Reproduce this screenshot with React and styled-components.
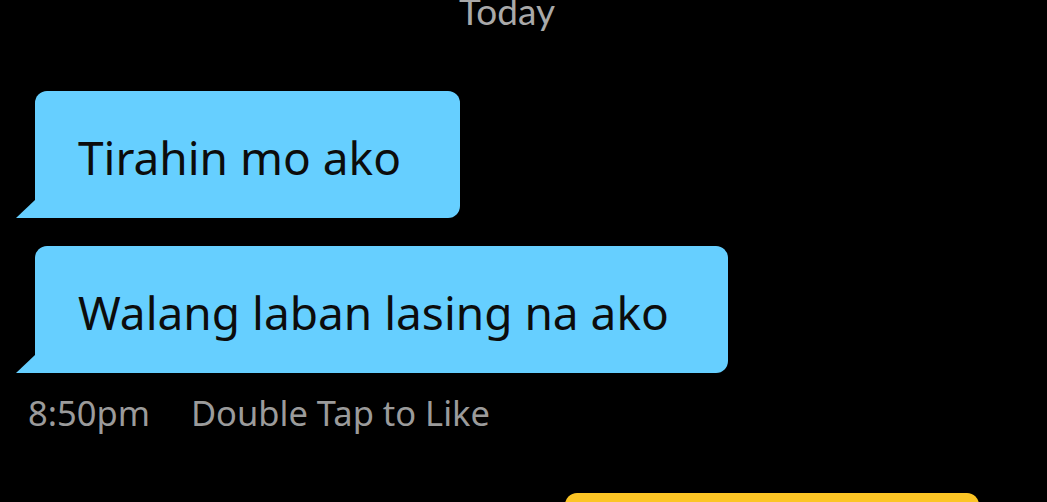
import React from "react";
import styled, { createGlobalStyle } from "styled-components";

const GlobalStyle = createGlobalStyle`
  html, body {
    margin: 0;
    padding: 0;
    background: #000;
    overflow: hidden;
  }
`;

const Thread = styled.div`
  display: flex;
  flex-direction: column;
  width: 1047px;
  height: 502px;
  overflow: hidden;
  font-family: "Noto Sans", "Open Sans", sans-serif;
`;

const DateLabel = styled.div`
  flex-shrink: 0;
  text-align: center;
  font-family: "Lato", "Noto Sans", sans-serif;
  font-size: 37px;
  line-height: 40px;
  color: #a9a9a9;
  margin-top: -9px;
  margin-bottom: 60px;
  padding-right: 33px;
`;

const Bubble = styled.div`
  position: relative;
  flex-shrink: 0;
  align-self: ${({ $mine }) => ($mine ? "flex-end" : "flex-start")};
  display: flex;
  align-items: center;
  box-sizing: border-box;
  height: 127px;
  padding: 4px 59px 0 43px;
  margin: ${({ $mine }) => ($mine ? "0 68px 0 0" : "0 0 0 35px")};
  background: ${({ $mine }) => ($mine ? "#fcc525" : "#66cfff")};
  color: #0c0c0c;
  font-size: 46px;
  border-radius: ${({ $mine }) => ($mine ? "12px 12px 0 12px" : "12px 12px 12px 0")};

  & + & {
    margin-top: 28px;
  }

  &::before {
    content: "";
    position: absolute;
    bottom: 0;
    left: -19px;
    width: 0;
    height: 0;
    border-bottom: 18px solid ${({ $mine }) => ($mine ? "#fcc525" : "#66cfff")};
    border-left: 19px solid transparent;
    display: ${({ $mine }) => ($mine ? "none" : "block")};
  }
`;

const Meta = styled.div`
  flex-shrink: 0;
  display: flex;
  gap: 41px;
  margin: 20px 0 0 28px;
  font-size: 34.5px;
  line-height: 40px;
  color: #9b9b9b;
`;

const MineBubble = styled(Bubble)`
  width: 414px;
  margin-top: 60px;
`;

export default function App() {
  return (
    <>
      <GlobalStyle />
      <Thread>
        <DateLabel>Today</DateLabel>
        <Bubble>Tirahin mo ako</Bubble>
        <Bubble>Walang laban lasing na ako</Bubble>
        <Meta>
          <span>8:50pm</span>
          <span>Double Tap to Like</span>
        </Meta>
        <MineBubble $mine />
      </Thread>
    </>
  );
}
